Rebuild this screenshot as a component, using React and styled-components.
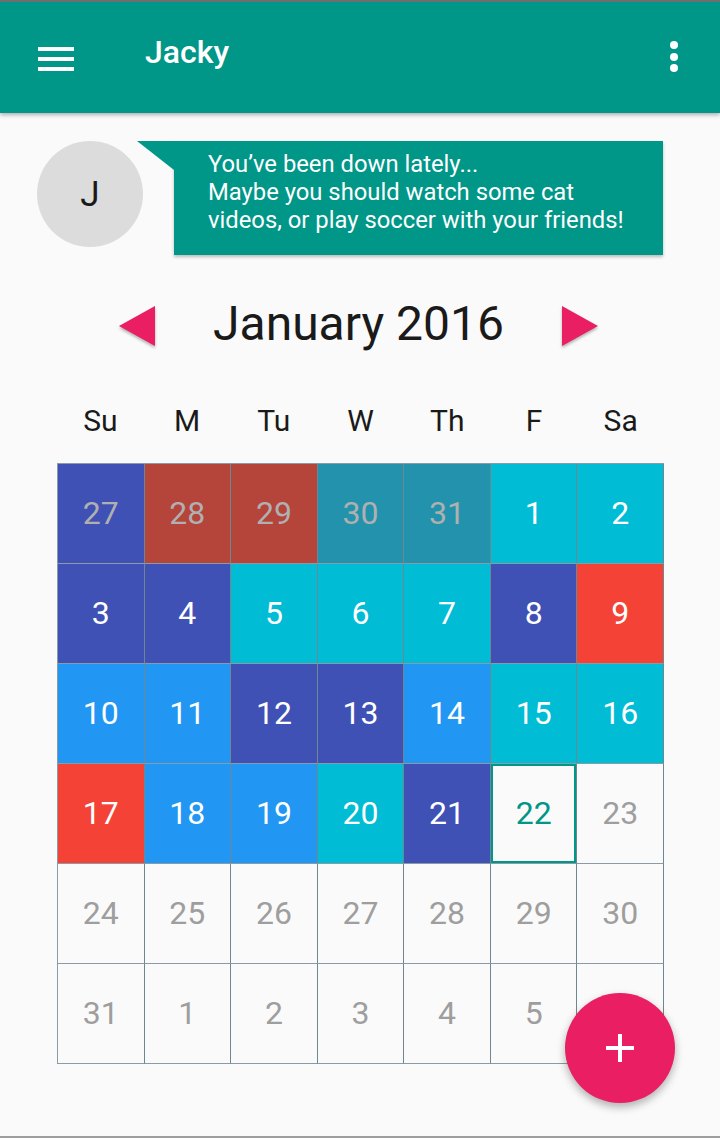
import React from 'react';
import styled, { createGlobalStyle } from 'styled-components';

const GlobalStyle = createGlobalStyle`
  html, body {
    margin: 0;
    padding: 0;
    background: #fafafa;
  }
  * {
    box-sizing: border-box;
  }
`;

const COLORS = {
  indigo: '#3f51b5',
  cyan: '#00bcd4',
  blue: '#2196f3',
  red: '#f44336',
  rust: '#b5443a',
  dimCyan: '#2393ad',
};

const weeks = [
  [
    { d: 27, bg: 'indigo', other: true },
    { d: 28, bg: 'rust', other: true },
    { d: 29, bg: 'rust', other: true },
    { d: 30, bg: 'dimCyan', other: true },
    { d: 31, bg: 'dimCyan', other: true },
    { d: 1, bg: 'cyan' },
    { d: 2, bg: 'cyan' },
  ],
  [
    { d: 3, bg: 'indigo' },
    { d: 4, bg: 'indigo' },
    { d: 5, bg: 'cyan' },
    { d: 6, bg: 'cyan' },
    { d: 7, bg: 'cyan' },
    { d: 8, bg: 'indigo' },
    { d: 9, bg: 'red' },
  ],
  [
    { d: 10, bg: 'blue' },
    { d: 11, bg: 'blue' },
    { d: 12, bg: 'indigo' },
    { d: 13, bg: 'indigo' },
    { d: 14, bg: 'blue' },
    { d: 15, bg: 'cyan' },
    { d: 16, bg: 'cyan' },
  ],
  [
    { d: 17, bg: 'red' },
    { d: 18, bg: 'blue' },
    { d: 19, bg: 'blue' },
    { d: 20, bg: 'cyan' },
    { d: 21, bg: 'indigo' },
    { d: 22, today: true },
    { d: 23 },
  ],
  [{ d: 24 }, { d: 25 }, { d: 26 }, { d: 27 }, { d: 28 }, { d: 29 }, { d: 30 }],
  [{ d: 31 }, { d: 1 }, { d: 2 }, { d: 3 }, { d: 4 }, { d: 5 }, { d: 6 }],
];

const dayNames = ['Su', 'M', 'Tu', 'W', 'Th', 'F', 'Sa'];

const App = () => (
  <Page>
    <GlobalStyle />
    <AppBar>
      <MenuButton aria-label="menu">
        <span />
        <span />
        <span />
      </MenuButton>
      <BarTitle>Jacky</BarTitle>
      <MoreButton aria-label="more">
        <i />
        <i />
        <i />
      </MoreButton>
    </AppBar>

    <MessageRow>
      <Avatar>J</Avatar>
      <Bubble>
        You’ve been down lately...
        <br />
        Maybe you should watch some cat
        <br />
        videos, or play soccer with your friends!
      </Bubble>
    </MessageRow>

    <MonthNav>
      <Arrow dir="left" />
      <MonthTitle>January 2016</MonthTitle>
      <Arrow dir="right" />
    </MonthNav>

    <CalendarWrap>
      <DayHeader>
        {dayNames.map((n) => (
          <DayName key={n}>{n}</DayName>
        ))}
      </DayHeader>
      <Grid>
        {weeks.flat().map((c, i) => (
          <Cell
            key={i}
            $bg={c.bg ? COLORS[c.bg] : null}
            $other={c.other}
            $today={c.today}
          >
            {c.d}
          </Cell>
        ))}
      </Grid>
    </CalendarWrap>

    <Fab aria-label="add">
      <svg width="30" height="30" viewBox="0 0 30 30">
        <rect x="13" y="1" width="4" height="28" fill="#fff" />
        <rect x="1" y="13" width="28" height="4" fill="#fff" />
      </svg>
    </Fab>
  </Page>
);

export default App;

const Page = styled.div`
  position: relative;
  width: 720px;
  height: 1138px;
  overflow: hidden;
  background: #fafafa;
  border-top: 2px solid #6f6f6f;
  border-bottom: 2px solid #9e9e9e;
  font-family: Roboto, 'Liberation Sans', sans-serif;
`;

const AppBar = styled.header`
  height: 111px;
  background: #009688;
  display: flex;
  align-items: center;
  padding: 0 38px 0 38px;
  box-shadow: 0 2px 4px rgba(0, 0, 0, 0.3);
  color: #fff;
`;

const MenuButton = styled.div`
  width: 36px;
  display: flex;
  flex-direction: column;
  gap: 6px;
  margin-top: 2px;
  span {
    display: block;
    height: 4px;
    background: #fff;
  }
`;

const BarTitle = styled.h1`
  margin: -12px 0 0 71px;
  flex: 1;
  font-size: 32px;
  font-weight: 500;
  line-height: 1;
`;

const MoreButton = styled.div`
  display: flex;
  flex-direction: column;
  gap: 3.5px;
  margin-right: 4px;
  margin-top: -2px;
  i {
    display: block;
    width: 8px;
    height: 8px;
    border-radius: 50%;
    background: #fff;
  }
`;

const MessageRow = styled.div`
  display: flex;
  align-items: flex-start;
  margin-top: 28px;
  padding-left: 37px;
  gap: 31px;
`;

const Avatar = styled.div`
  width: 106px;
  height: 106px;
  border-radius: 50%;
  background: #dcdcdc;
  display: flex;
  align-items: center;
  justify-content: center;
  font-size: 35px;
  color: #1a1a1a;
  flex-shrink: 0;
`;

const Bubble = styled.div`
  position: relative;
  width: 489px;
  height: 114px;
  background: #009688;
  color: #fff;
  font-size: 23.8px;
  line-height: 28px;
  padding: 9px 0 0 34px;
  box-shadow: 0 2px 3px rgba(0, 0, 0, 0.25);
  &::before {
    content: '';
    position: absolute;
    top: 0;
    left: -37px;
    border-top: 29px solid #009688;
    border-left: 37px solid transparent;
  }
`;

const MonthNav = styled.div`
  display: flex;
  align-items: center;
  justify-content: center;
  gap: 58px;
  margin-top: 41px;
  height: 56px;
  padding-right: 3px;
`;

const Arrow = styled.div`
  width: 0;
  height: 0;
  margin-top: 4px;
  border-top: 20px solid transparent;
  border-bottom: 20px solid transparent;
  ${(p) =>
    p.dir === 'left'
      ? 'border-right: 36px solid #e91e63;'
      : 'border-left: 36px solid #e91e63;'}
  filter: drop-shadow(0 2px 1.5px rgba(0, 0, 0, 0.3));
`;

const MonthTitle = styled.h2`
  margin: 0;
  font-size: 48px;
  font-weight: 400;
  line-height: 56px;
  color: #1a1a1a;
`;

const CalendarWrap = styled.div`
  width: 607px;
  margin: 49px 0 0 57px;
`;

const DayHeader = styled.div`
  display: grid;
  grid-template-columns: repeat(7, 1fr);
  height: 40px;
  margin-bottom: 22px;
`;

const DayName = styled.div`
  text-align: center;
  font-size: 30px;
  line-height: 40px;
  color: #1a1a1a;
`;

const Grid = styled.div`
  display: grid;
  grid-template-columns: repeat(7, 1fr);
  grid-auto-rows: 100px;
  border-top: 1px solid #8a9ba5;
  border-left: 1px solid #8a9ba5;
`;

const Cell = styled.div`
  display: flex;
  align-items: center;
  justify-content: center;
  font-size: 32px;
  padding-bottom: 2px;
  border-right: 1px solid #6f8793;
  border-bottom: 1px solid #8a9ba5;
  background: ${(p) => p.$bg || 'transparent'};
  color: ${(p) => {
    if (p.$today) return '#009688';
    if (p.$other) return '#b0b0b0';
    if (p.$bg) return '#ffffff';
    return '#9e9e9e';
  }};
  ${(p) => p.$today && 'box-shadow: inset 0 0 0 2px #009688;'}
`;

const Fab = styled.button`
  position: absolute;
  left: 565px;
  top: 991px;
  width: 110px;
  height: 110px;
  border: none;
  border-radius: 50%;
  background: #e91e63;
  display: flex;
  align-items: center;
  justify-content: center;
  padding: 0;
  box-shadow: 0 4px 8px rgba(0, 0, 0, 0.3);
`;
